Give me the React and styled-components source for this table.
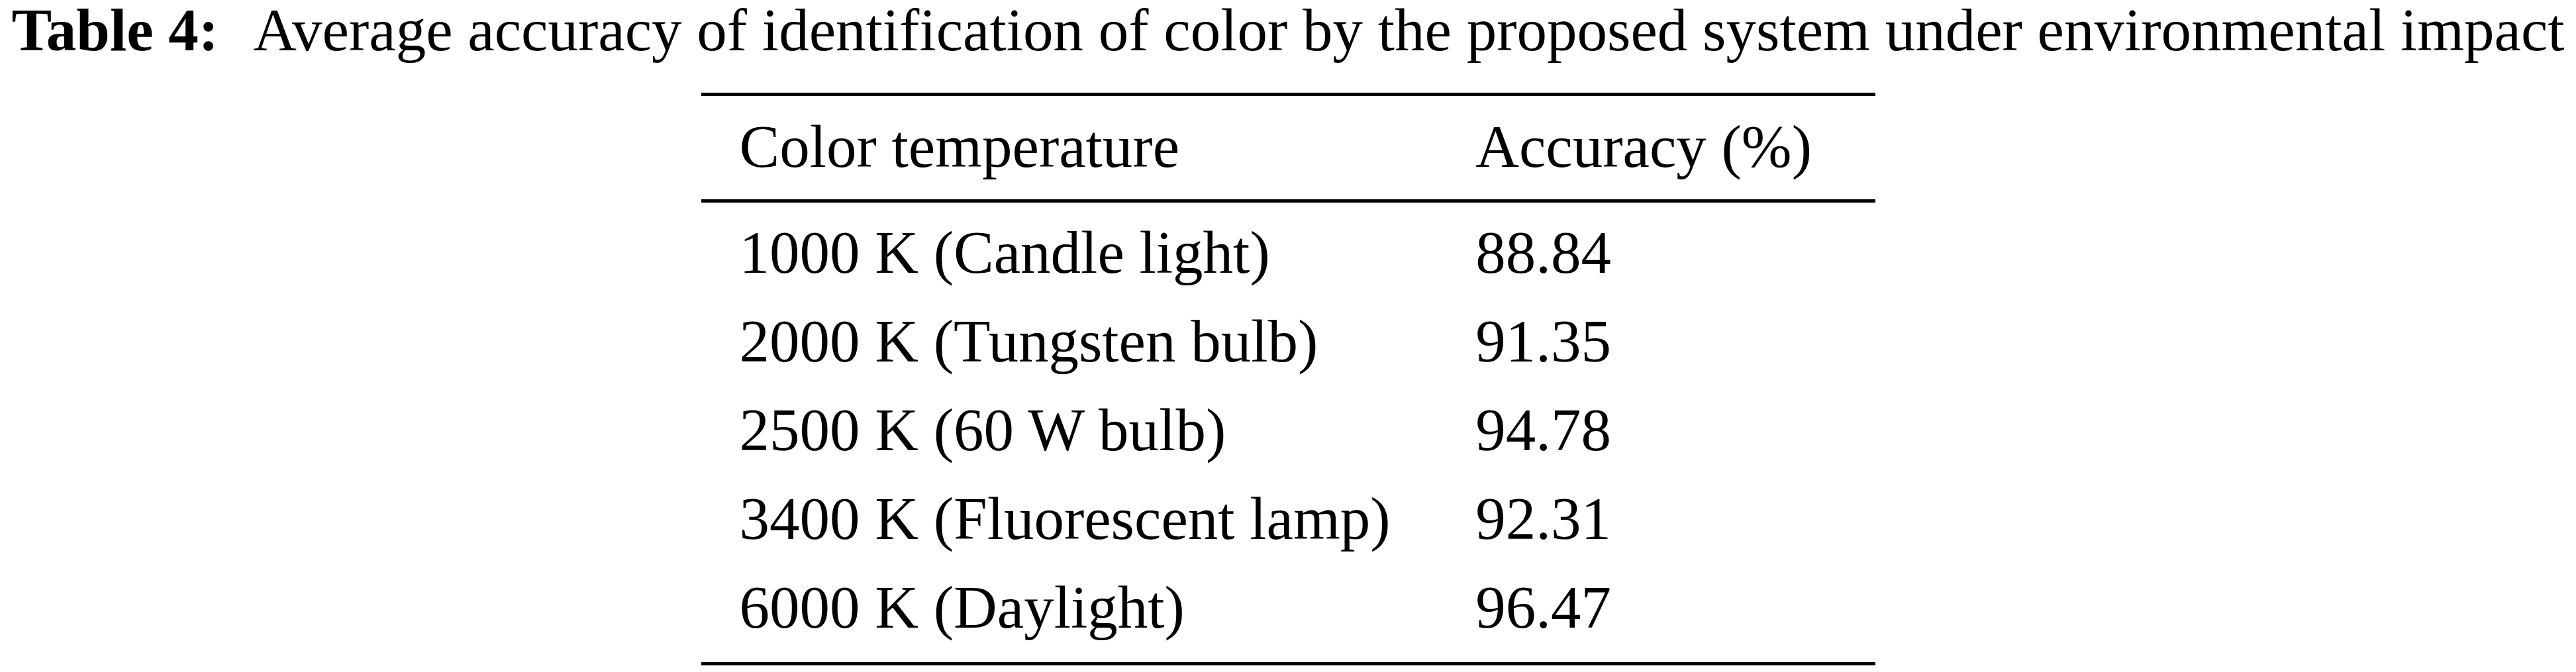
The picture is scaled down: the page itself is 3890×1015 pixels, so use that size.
import React from "react";
import styled, { createGlobalStyle } from "styled-components";

const Global = createGlobalStyle`
  html, body { margin: 0; padding: 0; background: #fff; }
  body { font-family: "Liberation Serif", "Times New Roman", serif; color: #000; }
`;

const Page = styled.div`
  width: 3890px;
  display: flex;
  flex-direction: column;
  align-items: center;
`;

const Caption = styled.div`
  font-size: 91px;
  line-height: 91px;
  white-space: nowrap;
`;

const Label = styled.b`
  font-weight: bold;
  margin-right: 52px;
`;

const Table = styled.table`
  margin-top: 49px;
  border-collapse: collapse;
  width: 1773px;
  font-size: 91px;
  line-height: 134px;
  border-top: 5px solid #000;
  border-bottom: 5px solid #000;
`;

const Cell = styled.td`
  padding: 0 0 0 58px;
  text-align: left;
  white-space: nowrap;
  width: ${(p) => p.$w}px;
  font-weight: normal;
`;

const HeadRow = styled.tr`
  border-bottom: 5px solid #000;
  & > td { padding-top: 10px; padding-bottom: 12px; }
`;

const BodyRow = styled.tr`
  &:first-child > td { padding-top: 9px; }
  &:last-child > td { padding-bottom: 15px; }
`;

const rows = [
  ["1000 K (Candle light)", "88.84"],
  ["2000 K (Tungsten bulb)", "91.35"],
  ["2500 K (60 W bulb)", "94.78"],
  ["3400 K (Fluorescent lamp)", "92.31"],
  ["6000 K (Daylight)", "96.47"],
];

export default function App() {
  return (
    <>
      <Global />
      <Page>
        <Caption>
          <Label>Table 4:</Label>
          Average accuracy of identification of color by the proposed system under environmental impact
        </Caption>
        <Table>
          <thead>
            <HeadRow>
              <Cell $w={1103}>Color temperature</Cell>
              <Cell $w={670}>Accuracy (%)</Cell>
            </HeadRow>
          </thead>
          <tbody>
            {rows.map(([a, b]) => (
              <BodyRow key={a}>
                <Cell $w={1103}>{a}</Cell>
                <Cell $w={670}>{b}</Cell>
              </BodyRow>
            ))}
          </tbody>
        </Table>
      </Page>
    </>
  );
}
